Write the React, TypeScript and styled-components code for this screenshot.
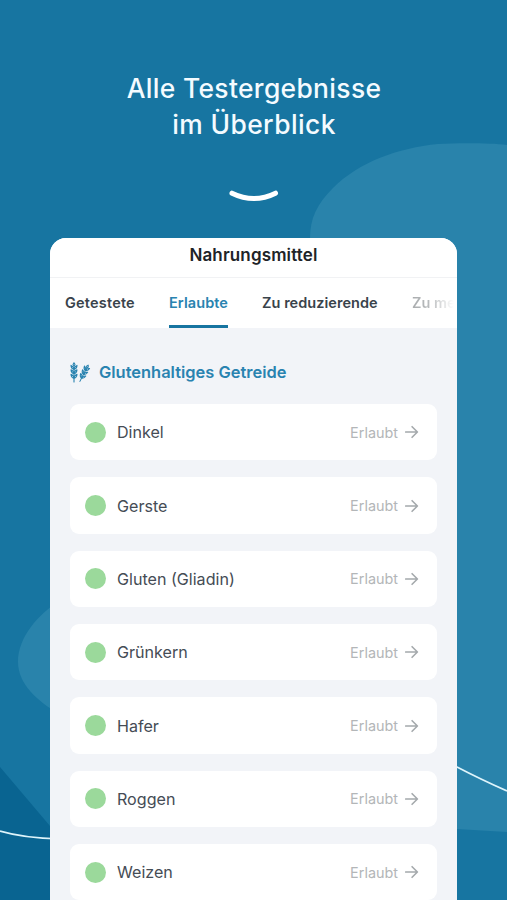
import React from "react";
import styled, { createGlobalStyle } from "styled-components";

const Global = createGlobalStyle`
  body { margin: 0; background: #1775a1; }
  *, *::before, *::after { box-sizing: border-box; }
`;

const Page = styled.div`
  position: relative;
  width: 507px;
  height: 900px;
  overflow: hidden;
  background: #1775a1;
  font-family: Inter, "Liberation Sans", sans-serif;
`;

const Backdrop = styled.svg`
  position: absolute;
  inset: 0;
`;

const Content = styled.div`
  position: relative;
  display: flex;
  flex-direction: column;
  align-items: center;
  padding-top: 70px;
`;

const Headline = styled.h1`
  margin: 0;
  height: 120px;
  color: #f4fbff;
  font-size: 26.4px;
  font-weight: 500;
  line-height: 36px;
  text-align: center;
  white-space: nowrap;
`;

const HeadlineLine = styled.span<{ $spacing: number }>`
  display: block;
  padding-left: 1px;
  letter-spacing: ${(p) => p.$spacing}px;
`;

const Smile = styled.svg`
  display: block;
  height: 14px;
  margin-bottom: 34px;
`;

const Card = styled.main`
  width: 407px;
  height: 680px;
  overflow: hidden;
  border-radius: 16px 16px 0 0;
  background: #f2f4f8;
`;

const CardHeader = styled.header`
  height: 40px;
  border-bottom: 1px solid #f1f2f4;
  background: #fff;
  color: #202327;
  font-size: 17px;
  font-weight: 600;
  line-height: 34px;
  text-align: center;
  letter-spacing: 0.14px;
`;

const Tabs = styled.nav`
  display: flex;
  gap: 34px;
  height: 50px;
  padding-left: 15px;
  overflow: hidden;
  background: #fff;
`;

const Tab = styled.div<{ $tone?: "active" | "fading"; $width: number; $spacing?: number }>`
  flex: 0 0 ${(p) => p.$width}px;
  height: 50px;
  border-bottom: 3px solid ${(p) => (p.$tone === "active" ? "#1775a1" : "transparent")};
  color: ${(p) => (p.$tone === "active" ? "#2983b0" : "#39434b")};
  ${(p) =>
    p.$tone === "fading" &&
    `background: linear-gradient(90deg, #a9acae 0, #b9bcbe 18px, #fff 42px) text; color: transparent;`}
  font-size: 14.5px;
  font-weight: 600;
  letter-spacing: ${(p) => p.$spacing ?? 0}px;
  line-height: 49px;
  white-space: nowrap;
`;

const Section = styled.section`
  padding: 32px 20px 0;
`;

const SectionTitle = styled.h2`
  display: flex;
  align-items: center;
  gap: 8px;
  height: 24px;
  margin: 0 0 20px;
  color: #2983b0;
  font-size: 16.45px;
  font-weight: 600;
  white-space: nowrap;
`;

const List = styled.div`
  display: flex;
  flex-direction: column;
  gap: 17px;
`;

const Row = styled.div`
  display: flex;
  align-items: center;
  flex: none;
  width: 367px;
  height: 56.35px;
  padding: 0 18px 0 15px;
  border-radius: 9px;
  background: #fff;
`;

const Dot = styled.span`
  width: 21px;
  height: 21px;
  margin-right: 11px;
  border-radius: 50%;
  background: #9bd99b;
`;

const Name = styled.span`
  flex: 1;
  color: #454c55;
  font-size: 16.1px;
`;

const Status = styled.span`
  display: flex;
  align-items: center;
  gap: 7px;
  color: #b3b6b8;
  font-size: 14.4px;
`;

const WheatIcon = () => (
  <svg width="21" height="21" viewBox="0 0 21 21" fill="none" stroke="#2983b0" strokeWidth="1.1" strokeLinecap="round" strokeLinejoin="round">
    <g id="ear">
      <path d="M4 4v16M4 .8L3 2.5 4 4.2 5 2.5z" />
      <path d="M4 7.4Q1.2 6.6 1 3.4Q3.7 4.3 4 7.4Q4.3 4.3 7 3.4Q6.8 6.6 4 7.4" />
      <path d="M4 11.8Q1.2 11 1 7.8Q3.7 8.7 4 11.8Q4.3 8.7 7 7.8Q6.8 11 4 11.8" />
      <path d="M4 16.2Q1.2 15.4 1 12.2Q3.7 13.1 4 16.2Q4.3 13.1 7 12.2Q6.8 15.4 4 16.2" />
    </g>
    <use href="#ear" transform="translate(14.2 10.9) rotate(27) scale(.95) translate(-4 -10)" />
  </svg>
);

const ArrowIcon = () => (
  <svg width="14" height="14" viewBox="0 0 14 14" fill="none" stroke="#a4a9ac" strokeWidth="1.6" strokeLinecap="round" strokeLinejoin="round">
    <path d="M.7 7h11.6M7.1 1.7L12.4 7l-5.3 5.3" />
  </svg>
);

const foods = ["Dinkel", "Gerste", "Gluten (Gliadin)", "Grünkern", "Hafer", "Roggen", "Weizen"];

export default function App() {
  return (
    <Page>
      <Global />
      <Backdrop width="507" height="900" viewBox="0 0 507 900">
        <path
          fill="#2983ab"
          d="M507 145C490 143 460 143 438 144C398 148 359 162 333 188C317 204 310 218 310 239V600H60C38 615 18 637 18 662C18 684 38 702 60 714L200 800L440 828L507 832Z"
        />
        <path fill="#096491" d="M0 767L50 826L110 900H0Z" />
        <path fill="none" stroke="#def4fb" strokeWidth="1.7" d="M0 831Q24 838 60 839C220 842 340 700 457 767Q480 779 507 791" />
      </Backdrop>
      <Content>
        <Headline>
          <HeadlineLine $spacing={0.35}>Alle Testergebnisse</HeadlineLine>
          <HeadlineLine $spacing={0.42}>im Überblick</HeadlineLine>
        </Headline>
        <Smile width="50" height="14" viewBox="0 0 50 14">
          <path d="M3 3.2Q25 14 46.5 3.2" fill="none" stroke="#fff" strokeWidth="5" strokeLinecap="round" />
        </Smile>
        <Card>
          <CardHeader>Nahrungsmittel</CardHeader>
          <Tabs>
            <Tab $width={70} $spacing={0.2}>Getestete</Tab>
            <Tab $width={59} $spacing={0.08} $tone="active">Erlaubte</Tab>
            <Tab $width={116} $spacing={0.04}>Zu reduzierende</Tab>
            <Tab $width={44} $tone="fading">Zu me</Tab>
          </Tabs>
          <Section>
            <SectionTitle>
              <WheatIcon />
              Glutenhaltiges Getreide
            </SectionTitle>
            <List>
              {foods.map((food) => (
                <Row key={food}>
                  <Dot />
                  <Name>{food}</Name>
                  <Status>
                    Erlaubt
                    <ArrowIcon />
                  </Status>
                </Row>
              ))}
            </List>
          </Section>
        </Card>
      </Content>
    </Page>
  );
}
